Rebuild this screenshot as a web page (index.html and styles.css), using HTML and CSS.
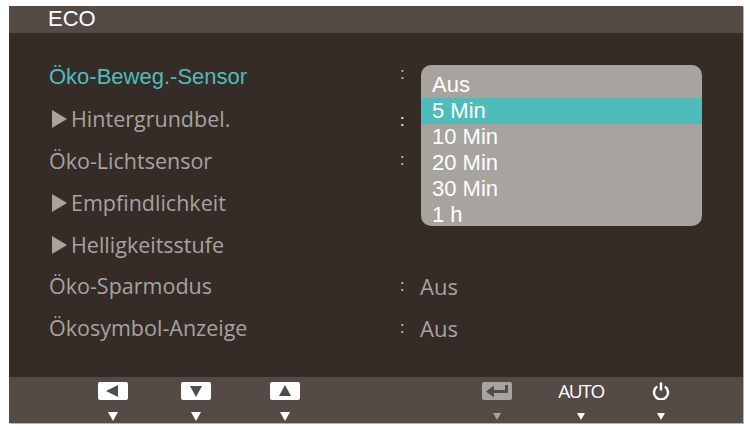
FILE: index.html
```html
<!DOCTYPE html>
<html lang="de">
<head>
    <meta charset="UTF-8">
    <title>ECO</title>
    <link rel="stylesheet" href="styles.css">
</head>
<body>
    <div class="osd">
        <div class="title-bar">ECO</div>

        <div class="content">
            <div class="row active"><span class="label">Öko-Beweg.-Sensor</span><span class="colon">:</span></div>
            <div class="row sub"><span class="label"><i class="arrow"></i>Hintergrundbel.</span><span class="colon bright">:</span></div>
            <div class="row"><span class="label">Öko-Lichtsensor</span><span class="colon">:</span></div>
            <div class="row sub"><span class="label"><i class="arrow"></i>Empfindlichkeit</span></div>
            <div class="row sub"><span class="label"><i class="arrow"></i>Helligkeitsstufe</span></div>
            <div class="row lower"><span class="label">Öko-Sparmodus</span><span class="colon">:</span><span class="value">Aus</span></div>
            <div class="row lower"><span class="label">Ökosymbol-Anzeige</span><span class="colon">:</span><span class="value">Aus</span></div>

            <ul class="dropdown">
                <li>Aus</li>
                <li class="selected">5 Min</li>
                <li>10 Min</li>
                <li>20 Min</li>
                <li>30 Min</li>
                <li>1 h</li>
            </ul>
        </div>

        <div class="footer">
            <div class="btn">
                <div class="key"><svg width="16" height="14" viewBox="0 0 16 14"><path d="M1 7 13 1V13Z" fill="#544b47"/></svg></div>
                <i class="mark"></i>
            </div>
            <div class="btn">
                <div class="key"><svg width="14" height="12" viewBox="0 0 14 12"><path d="M1 1H13L7 12Z" fill="#544b47"/></svg></div>
                <i class="mark"></i>
            </div>
            <div class="btn">
                <div class="key"><svg width="14" height="12" viewBox="0 0 14 12"><path d="M1 11H13L7 0Z" fill="#544b47"/></svg></div>
                <i class="mark"></i>
            </div>
            <div class="btn">
                <div class="key key-off"><svg width="24" height="14" viewBox="0 0 24 14"><path d="M21.5 1V7.5H7" fill="none" stroke="#544b47" stroke-width="3"/><path d="M1 7.5 9 1.5V13.5Z" fill="#544b47"/></svg></div>
                <i class="mark mark-small mark-off"></i>
            </div>
            <div class="btn">
                <div class="key-text">AUTO</div>
                <i class="mark mark-small"></i>
            </div>
            <div class="btn">
                <div class="key-icon"><svg width="18" height="18" viewBox="0 0 18 18"><path d="M5.2 4.6a7 7 0 1 0 7.6 0" fill="none" stroke="#fff" stroke-width="2.4"/><path d="M9 0.5V8.5" stroke="#fff" stroke-width="2.4"/></svg></div>
                <i class="mark mark-small"></i>
            </div>
        </div>
    </div>
</body>
</html>
```

FILE: styles.css
```css
body {
    margin: 0;
    background-color: #ffffff;
    padding: 6px 7px 7px 9px;
}

.osd {
    display: flex;
    flex-direction: column;
    height: 417px;
    background-color: #352c28;
    box-shadow: 1px 1px 0 #b5b1ac;
}

.title-bar {
    height: 27px;
    padding-left: 39px;
    background-color: #544b47;
    color: #ffffff;
    font-family: "Liberation Sans", sans-serif;
    font-size: 22px;
    line-height: 25px;
}

.content {
    position: relative;
    flex: 1;
    padding-top: 23px;
}

.row {
    display: flex;
    align-items: center;
    height: 42px;
    padding-left: 40px;
    color: #a7a39e;
    font-family: "Open Sans", sans-serif;
    font-size: 21.5px;
}

.row.active {
    color: #4fbcbc;
    font-family: "Liberation Sans", sans-serif;
    font-size: 22px;
}

.row.sub .label {
    display: flex;
    align-items: center;
}

.label {
    width: 351px;
    margin-top: -2px;
}

.row.active .label {
    margin-top: 0;
}

.row.lower .label {
    margin-top: -4px;
}

.arrow {
    width: 0;
    height: 0;
    margin: 2px 4px 0 3px;
    border-left: 15px solid #a7a39e;
    border-top: 9px solid transparent;
    border-bottom: 9px solid transparent;
}

.colon {
    width: 20px;
    margin-top: -6px;
    font-size: 17px;
    color: #c9c6c2;
}

.colon.bright {
    color: #ffffff;
    margin-top: 0;
}

.value {
    font-size: 22px;
    margin-top: -2px;
}

.dropdown {
    position: absolute;
    top: 32px;
    left: 412px;
    width: 281px;
    height: 154px;
    margin: 0;
    padding: 7px 0 0;
    list-style: none;
    overflow: hidden;
    border-radius: 10px;
    background-color: #a7a39e;
    color: #ffffff;
    font-family: "Liberation Sans", sans-serif;
    font-size: 22px;
}

.dropdown li {
    height: 26px;
    padding-left: 11px;
    line-height: 26px;
}

.dropdown .selected {
    background-color: #4fbcbc;
}

.footer {
    display: grid;
    grid-template-columns: 83px 89px 212px 84px 80px 40px;
    height: 46px;
    padding-left: 84px;
    background-color: #544b47;
}

.btn {
    display: flex;
    flex-direction: column;
    align-items: center;
    width: 40px;
    padding-top: 5px;
}

.key {
    display: flex;
    align-items: center;
    justify-content: center;
    width: 30px;
    height: 18px;
    border-radius: 2px;
    background-color: #ffffff;
}

.key-off {
    background-color: #a7a39e;
}

.key-text {
    height: 18px;
    color: #ffffff;
    font-family: "Open Sans", sans-serif;
    font-size: 19px;
    line-height: 18px;
    letter-spacing: -1.4px;
}

.key-icon {
    height: 18px;
}

.mark {
    width: 0;
    height: 0;
    margin-top: 12px;
    border-top: 9px solid #ffffff;
    border-left: 5px solid transparent;
    border-right: 5px solid transparent;
}

.mark-small {
    margin-top: 13px;
    border-top-width: 7px;
    border-left-width: 4px;
    border-right-width: 4px;
}

.mark-off {
    border-top-color: #a7a39e;
}
```
